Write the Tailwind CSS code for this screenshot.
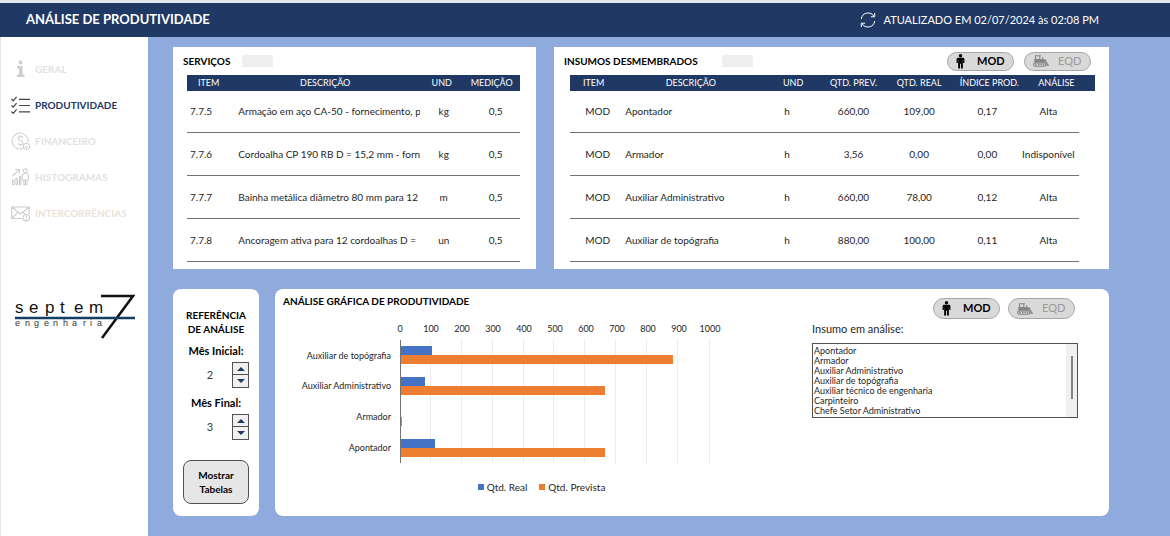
<!DOCTYPE html>
<html lang="pt-BR">
<head>
<meta charset="utf-8">
<title>Análise de Produtividade</title>
<script src="https://cdn.jsdelivr.net/npm/@tailwindcss/browser@4"></script>
</head>
<body class="min-h-screen flex flex-col bg-[#8faadc] font-['Lato','Open_Sans',sans-serif] text-[10px] text-neutral-800">

<svg class="hidden" aria-hidden="true">
  <symbol id="worker" viewBox="0 0 9 16">
    <circle cx="4.500" cy="1.800" r="1.800"/>
    <path d="M2 4h5c1 0 1.700.7 1.700 1.700V9.500H7.300V6.500H7V15.500H5V10.300H4V15.500H2V6.500H1.700V9.500H.3V5.700C.3 4.700 1 4 2 4z"/>
  </symbol>
  <symbol id="dozer" viewBox="0 0 17 12">
    <path d="M2 .3h6v1H7.300V4h2V2h1v2.200l3 .6V7.200H1.200V4H2zM3 1.300V4h3.300V1.300z" fill-rule="evenodd"/>
    <path d="M14 4.500c-.2 2.500.6 4.700 2.700 6.300H13.600V8.500H13V7h1z"/>
    <path d="M2.300 7.900h9.200a1.600 1.600 0 0 1 0 3.300H2.300a1.600 1.600 0 0 1 0-3.300z" fill="none" stroke="currentColor" stroke-width="1.100"/>
    <path d="M2.500 9.600h9" stroke="currentColor" stroke-width="1.500" stroke-dasharray="1.500 1"/>
  </symbol>
</svg>

<header class="flex items-center border-t-3 border-[#e3e7ee] bg-[#203864] h-[37px] pl-[26px] pr-[71px] text-white">
  <h1 class="text-[13px] font-bold">ANÁLISE DE PRODUTIVIDADE</h1>
  <button type="button" aria-label="Atualizar" class="ml-auto mr-2">
    <svg class="size-4" viewBox="0 0 16 16" fill="none" stroke="currentColor" stroke-width="1">
      <path d="M1.300 7A6.800 6.800 0 0 1 14 4.500M14.700 1v3.800h-3.800M14.700 9A6.800 6.800 0 0 1 2 11.500M1.300 15v-3.800h3.800"/>
    </svg>
  </button>
  <p class="text-[11px]">ATUALIZADO EM 02/07/2024 às 02:08 PM</p>
</header>

<div class="flex flex-1">
  <aside class="w-[148px] shrink-0 bg-white border-l border-neutral-200 pt-[14px]">
    <nav class="flex flex-col pl-2.5 text-[10px] font-bold text-[#e2e2e2]">
      <a href="#" class="flex h-9 items-center gap-[5px]">
        <svg class="w-[19px] h-[18px] text-[#cfcfcf]" viewBox="0 0 19 18" fill="currentColor"><circle cx="9.500" cy="2.600" r="2"/><path d="M6 6h5.500v8.500H13.500V17H6v-2.500h2V8.500H6z"/></svg>
        GERAL</a>
      <a href="#" aria-current="page" class="flex h-9 items-center gap-[5px] text-[#203864]">
        <svg class="w-[19px] h-[18px] text-[#444]" viewBox="0 0 19 18" fill="none" stroke="currentColor" stroke-width="1.200"><path d="M.5 3l1.700 1.800L5.600.8M.5 9.300l1.700 1.800 3.400-4M.5 15.600l1.700 1.800 3.400-4M8 3.300h11M8 9.500h11M8 15.800h11"/></svg>
        PRODUTIVIDADE</a>
      <a href="#" class="flex h-9 items-center gap-[5px]">
        <svg class="w-[19px] h-[18px] text-[#d2d2d2]" viewBox="0 0 19 18" fill="none" stroke="currentColor" stroke-width="1.100"><path d="M12.500 16.200A8 8 0 1 1 17 10M12 5.600C11.500 4.300 7 4 7 6.600c0 2.500 5 1.500 5 4.100 0 2.500-4.800 2.200-5.200.5M9.500 3v1.600M9.500 12.300V14"/><circle cx="15.500" cy="14.300" r="3.100"/><path d="M14 14.400l1.100 1.100 2-2.200"/></svg>
        FINANCEIRO</a>
      <a href="#" class="flex h-9 items-center gap-[5px]">
        <svg class="w-[19px] h-[18px] text-[#cecece]" viewBox="0 0 19 18" fill="none" stroke="currentColor" stroke-width="1.100"><path d="M1.500 8L8 1.800M4.300 1.500H8.300V5.500"/><path d="M1.500 12h1.600v4.500H1.500zM5 10.500h1.600v6H5zM8.500 8.500h1.200v8H8.500z"/><circle cx="14.300" cy="2.800" r="1.900"/><path d="M12.800 16.800V12h-1.500V7.300c0-1 .6-1.600 1.500-1.600h3c.9 0 1.600.6 1.600 1.600V12h-1.500v4.800zM14.300 11v5.800"/></svg>
        HISTOGRAMAS</a>
      <a href="#" class="flex h-9 items-center gap-[5px] text-[#ebe1d8]">
        <svg class="w-[19px] h-[18px] text-[#cbcbcb]" viewBox="0 0 19 18" fill="none" stroke="currentColor" stroke-width="1.100"><path d="M11 14.500H.8V3h17.400v7M.8 3l8.700 7 8.700-7M.8 14.500L7 8.300M12 8.300l2 2"/><circle cx="15.300" cy="13.800" r="3.300"/><path d="M15.300 11.800v2.400M15.300 15v1"/></svg>
        INTERCORRÊNCIAS</a>
    </nav>
    <svg class="mt-[61px] ml-3.5 w-[120px] h-12" viewBox="0 0 120 48" role="img" aria-label="Septem 7 Engenharia">
      <g font-family="Liberation Sans, sans-serif">
        <text y="21" font-size="17" fill="#111" x="0 14 30 45 59 74">septem</text>
        <text y="34" font-size="9" fill="#333" x="0 10 19 29 38 48 57 68 75 82">engenharia</text>
      </g>
      <path d="M86 4h32L87 46" fill="none" stroke="#111" stroke-width="2.500"/>
      <path d="M0 26h120" stroke="#123f63" stroke-width="2.400"/>
    </svg>
  </aside>

  <main class="flex-1 min-w-0 pt-[10px] pl-[25px] pr-[61px] pb-5 flex flex-col gap-5">
    <div class="grid grid-cols-[363fr_555fr] gap-[18px]">
      <section class="bg-white pb-[7px]">
        <div class="flex h-7 items-center pl-2.5 gap-3">
          <h2 class="text-[10px] font-bold text-black">SERVIÇOS</h2>
          <span class="h-3 w-[31px] bg-[#efefef]"></span>
        </div>
        <div class="pl-3.5 pr-4">
          <table class="w-full table-fixed h-[187px] text-center whitespace-nowrap">
            <colgroup><col class="w-[13%]"><col class="w-[57%]"><col class="w-[13%]"><col class="w-[17%]"></colgroup>
            <thead class="bg-[#203864] text-white text-[9px] leading-4">
              <tr class="h-4"><th class="font-normal">ITEM</th><th class="font-normal">DESCRIÇÃO</th><th class="font-normal">UND</th><th class="font-normal">MEDIÇÃO</th></tr>
            </thead>
            <tbody>
              <tr class="border-b border-neutral-500"><td class="text-left pl-[3px]">7.7.5</td><td class="pl-2 text-left"><div class="overflow-hidden">Armação em aço CA-50 - fornecimento, p</div></td><td class="pl-1">kg</td><td class="pl-2">0,5</td></tr>
              <tr class="border-b border-neutral-500"><td class="text-left pl-[3px]">7.7.6</td><td class="pl-2 text-left"><div class="overflow-hidden">Cordoalha CP 190 RB D = 15,2 mm - forn</div></td><td class="pl-1">kg</td><td class="pl-2">0,5</td></tr>
              <tr class="border-b border-neutral-500"><td class="text-left pl-[3px]">7.7.7</td><td class="pl-2 text-left"><div class="overflow-hidden">Bainha metálica diâmetro 80 mm para 12</div></td><td class="pl-1">m</td><td class="pl-2">0,5</td></tr>
              <tr class="border-b border-neutral-500"><td class="text-left pl-[3px]">7.7.8</td><td class="pl-2 text-left"><div class="overflow-hidden">Ancoragem ativa para 12 cordoalhas D =</div></td><td class="pl-1">un</td><td class="pl-2">0,5</td></tr>
            </tbody>
          </table>
        </div>
      </section>

      <section class="bg-white pb-[7px]">
        <div class="flex h-7 items-center pl-2.5 pr-[18px]">
          <h2 class="text-[10px] font-bold text-black">INSUMOS DESMEMBRADOS</h2>
          <span class="ml-6 h-3 w-[31px] bg-[#efefef]"></span>
          <div class="ml-auto flex gap-2.5 text-[11px]">
            <button type="button" class="flex h-[19px] w-[67px] items-center rounded-full border border-[#a6a6a6] bg-[#d9d9d9] pl-2 font-bold text-black"><svg class="w-[9px] h-[15px] mr-3" fill="currentColor"><use href="#worker"/></svg>MOD</button>
            <button type="button" class="flex h-[19px] w-[67px] items-center rounded-full border border-[#a6a6a6] bg-[#d9d9d9] pl-2 text-[#9a9a9a]"><svg class="w-[17px] h-3 mr-2 text-[#848484]" fill="currentColor"><use href="#dozer"/></svg>EQD</button>
          </div>
        </div>
        <div class="pl-4 pr-3.5">
          <table class="w-full table-fixed h-[187px] text-center whitespace-nowrap">
            <colgroup><col class="w-[9%]"><col class="w-[28%]"><col class="w-[11%]"><col class="w-[12%]"><col class="w-[13%]"><col class="w-[13%]"><col class="w-[11%]"><col class="w-[3%]"></colgroup>
            <thead class="bg-[#203864] text-white text-[9px] leading-4">
              <tr class="h-4"><th class="font-normal">ITEM</th><th class="font-normal">DESCRIÇÃO</th><th class="font-normal">UND</th><th class="font-normal">QTD. PREV.</th><th class="font-normal">QTD. REAL</th><th class="font-normal pl-1">ÍNDICE PROD.</th><th class="font-normal pl-3">ANÁLISE</th><td></td></tr>
            </thead>
            <tbody>
              <tr><td class="border-b border-neutral-500 pl-2">MOD</td><td class="border-b border-neutral-500 pl-2 text-left">Apontador</td><td class="border-b border-neutral-500 pr-3">h</td><td class="border-b border-neutral-500">660,00</td><td class="border-b border-neutral-500">109,00</td><td class="border-b border-neutral-500">0,17</td><td class="border-b border-neutral-500 pr-1">Alta</td></tr>
              <tr><td class="border-b border-neutral-500 pl-2">MOD</td><td class="border-b border-neutral-500 pl-2 text-left">Armador</td><td class="border-b border-neutral-500 pr-3">h</td><td class="border-b border-neutral-500">3,56</td><td class="border-b border-neutral-500">0,00</td><td class="border-b border-neutral-500">0,00</td><td class="border-b border-neutral-500 pr-1">Indisponível</td></tr>
              <tr><td class="border-b border-neutral-500 pl-2">MOD</td><td class="border-b border-neutral-500 pl-2 text-left">Auxiliar Administrativo</td><td class="border-b border-neutral-500 pr-3">h</td><td class="border-b border-neutral-500">660,00</td><td class="border-b border-neutral-500">78,00</td><td class="border-b border-neutral-500">0,12</td><td class="border-b border-neutral-500 pr-1">Alta</td></tr>
              <tr><td class="border-b border-neutral-500 pl-2">MOD</td><td class="border-b border-neutral-500 pl-2 text-left">Auxiliar de topógrafia</td><td class="border-b border-neutral-500 pr-3">h</td><td class="border-b border-neutral-500">880,00</td><td class="border-b border-neutral-500">100,00</td><td class="border-b border-neutral-500">0,11</td><td class="border-b border-neutral-500 pr-1">Alta</td></tr>
            </tbody>
          </table>
        </div>
      </section>
    </div>

    <div class="flex flex-1 gap-4">
      <section class="w-[86px] shrink-0 rounded-lg bg-white pt-[19px] pb-3 px-2.5 flex flex-col text-[11px] leading-[14px] text-center text-black">
        <h2 class="font-bold text-[10px] leading-[14px]">REFERÊNCIA<br>DE ANÁLISE</h2>
        <label for="ini" class="mt-2 font-bold">Mês Inicial:</label>
        <div class="mt-1 flex h-[26px] items-center justify-end gap-2">
          <input id="ini" value="2" class="w-7 text-center text-neutral-700">
          <div class="flex w-[17px] flex-col border border-neutral-600 divide-y divide-neutral-600 bg-[#f0f0f0] text-[#203864]">
            <button type="button" aria-label="Aumentar mês inicial" class="flex h-3 items-center justify-center"><svg class="w-2 h-1" viewBox="0 0 8 4" fill="currentColor"><path d="M0 4l4-4 4 4z"/></svg></button>
            <button type="button" aria-label="Diminuir mês inicial" class="flex h-3 items-center justify-center"><svg class="w-2 h-1" viewBox="0 0 8 4" fill="currentColor"><path d="M0 0h8L4 4z"/></svg></button>
          </div>
        </div>
        <label for="fim" class="mt-2 font-bold">Mês Final:</label>
        <div class="mt-1 flex h-[26px] items-center justify-end gap-2">
          <input id="fim" value="3" class="w-7 text-center text-neutral-700">
          <div class="flex w-[17px] flex-col border border-neutral-600 divide-y divide-neutral-600 bg-[#f0f0f0] text-[#203864]">
            <button type="button" aria-label="Aumentar mês final" class="flex h-3 items-center justify-center"><svg class="w-2 h-1" viewBox="0 0 8 4" fill="currentColor"><path d="M0 4l4-4 4 4z"/></svg></button>
            <button type="button" aria-label="Diminuir mês final" class="flex h-3 items-center justify-center"><svg class="w-2 h-1" viewBox="0 0 8 4" fill="currentColor"><path d="M0 0h8L4 4z"/></svg></button>
          </div>
        </div>
        <button type="button" class="mt-auto h-11 rounded-lg border border-neutral-600 bg-[#e7e6e6] text-[10px] leading-[14px] font-bold">Mostrar<br>Tabelas</button>
      </section>

      <section class="flex-1 flex rounded-lg bg-white pl-2 pr-[31px]">
        <div class="flex-1 pt-1.5 mr-[102px]">
          <h2 class="text-[10px] leading-3 font-bold text-black">ANÁLISE GRÁFICA DE PRODUTIVIDADE</h2>
          <div class="mt-4 ml-[117px] flex justify-between text-[9px] leading-3">
            <span class="w-0 flex justify-center">0</span><span class="w-0 flex justify-center">100</span><span class="w-0 flex justify-center">200</span><span class="w-0 flex justify-center">300</span><span class="w-0 flex justify-center">400</span><span class="w-0 flex justify-center">500</span><span class="w-0 flex justify-center">600</span><span class="w-0 flex justify-center">700</span><span class="w-0 flex justify-center">800</span><span class="w-0 flex justify-center">900</span><span class="w-0 flex justify-center">1000</span>
          </div>
          <div class="mt-[5px] flex h-[123px]">
            <div class="w-[117px] pr-[9px] grid grid-rows-4 items-center text-right text-[9px]">
              <span>Auxiliar de topógrafia</span><span>Auxiliar Administrativo</span><span>Armador</span><span>Apontador</span>
            </div>
            <div class="relative flex-1">
              <div class="absolute inset-0 grid grid-cols-10 divide-x divide-[#ececec] border-r border-[#ececec]"><i></i><i></i><i></i><i></i><i></i><i></i><i></i><i></i><i></i><i></i></div>
              <div class="relative grid h-full grid-rows-4 items-center border-l border-neutral-500">
                <div><div class="h-[9px] bg-[#4472c4]" style="width:10%"></div><div class="h-[9px] bg-[#ed7d31]" style="width:88%"></div></div>
                <div><div class="h-[9px] bg-[#4472c4]" style="width:7.8%"></div><div class="h-[9px] bg-[#ed7d31]" style="width:66%"></div></div>
                <div><div class="h-[9px] bg-[#4472c4]" style="width:0%"></div><div class="h-[9px] bg-[#ed7d31]" style="width:0.356%"></div></div>
                <div><div class="h-[9px] bg-[#4472c4]" style="width:10.9%"></div><div class="h-[9px] bg-[#ed7d31]" style="width:66%"></div></div>
              </div>
            </div>
          </div>
          <div class="mt-[18px] flex justify-center gap-3 pl-[90px] text-[10px] leading-3">
            <span class="flex items-center gap-[3px]"><i class="size-1.5 bg-[#4472c4]"></i>Qtd. Real</span>
            <span class="flex items-center gap-[3px]"><i class="size-1.5 bg-[#ed7d31]"></i>Qtd. Prevista</span>
          </div>
        </div>

        <div class="w-[266px] shrink-0 pt-[9px]">
          <div class="flex justify-end gap-2 pr-[3px] text-[11px]">
            <button type="button" class="flex h-[21px] w-[67px] items-center rounded-full border border-[#a6a6a6] bg-[#d9d9d9] pl-2 font-bold text-black"><svg class="w-[9px] h-[15px] mr-3" fill="currentColor"><use href="#worker"/></svg>MOD</button>
            <button type="button" class="flex h-[21px] w-[67px] items-center rounded-full border border-[#a6a6a6] bg-[#d9d9d9] pl-2 text-[#9a9a9a]"><svg class="w-[17px] h-3 mr-2 text-[#848484]" fill="currentColor"><use href="#dozer"/></svg>EQD</button>
          </div>
          <label for="insumo" class="mt-1 block text-[11px] leading-3">Insumo em análise:</label>
          <div class="relative mt-2">
            <select id="insumo" size="7" class="block h-[75px] w-full overflow-hidden border border-neutral-600 bg-white font-['Lato'] text-[9px] pt-px">
              <option class="h-[10px] min-h-0 p-0 pl-px leading-[10px]">Apontador</option>
              <option class="h-[10px] min-h-0 p-0 pl-px leading-[10px]">Armador</option>
              <option class="h-[10px] min-h-0 p-0 pl-px leading-[10px]">Auxiliar Administrativo</option>
              <option class="h-[10px] min-h-0 p-0 pl-px leading-[10px]">Auxiliar de topógrafia</option>
              <option class="h-[10px] min-h-0 p-0 pl-px leading-[10px]">Auxiliar técnico de engenharia</option>
              <option class="h-[10px] min-h-0 p-0 pl-px leading-[10px]">Carpinteiro</option>
              <option class="h-[10px] min-h-0 p-0 pl-px leading-[10px]">Chefe Setor Administrativo</option>
            </select>
            <div class="absolute inset-y-px right-px w-[11px] bg-[#f0f0f0]"><div class="mx-auto mt-3 h-[43px] w-0.5 bg-[#858585]"></div></div>
          </div>
        </div>
      </section>
    </div>
  </main>
</div>
</body>
</html>
